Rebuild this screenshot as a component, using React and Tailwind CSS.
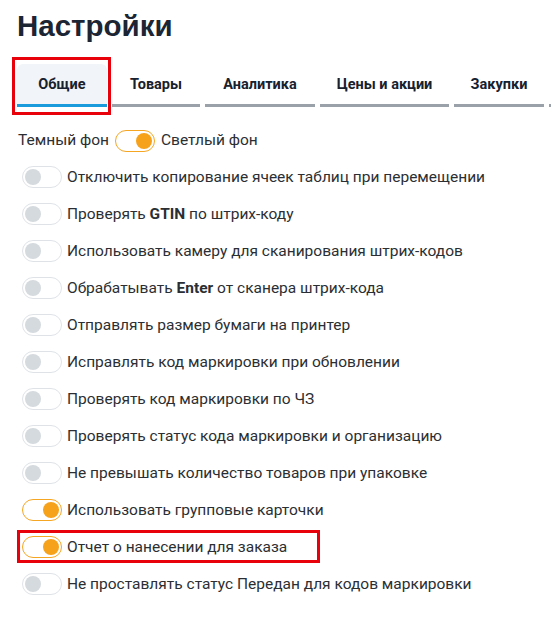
import React, { useState } from 'react'

const tabs = [
  { label: 'Общие', w: 'w-[90px]' },
  { label: 'Товары', w: 'w-[88px]' },
  { label: 'Аналитика', w: 'w-[110px]' },
  { label: 'Цены и акции', w: 'w-[129px]' },
  { label: 'Закупки', w: 'w-[90px]' },
  { label: '', w: 'w-[90px]' },
]

const rows = [
  { on: false, text: <>Отключить копирование ячеек таблиц при перемещении</> },
  { on: false, text: <>Проверять <b className="font-bold">GTIN</b> по штрих-коду</> },
  { on: false, text: <>Использовать камеру для сканирования штрих-кодов</> },
  { on: false, text: <>Обрабатывать <b className="font-bold">Enter</b> от сканера штрих-кода</> },
  { on: false, text: <>Отправлять размер бумаги на принтер</> },
  { on: false, text: <>Исправлять код маркировки при обновлении</> },
  { on: false, text: <>Проверять код маркировки по ЧЗ</> },
  { on: false, text: <>Проверять статус кода маркировки и организацию</> },
  { on: false, text: <>Не превышать количество товаров при упаковке</> },
  { on: true, text: <>Использовать групповые карточки</> },
  { on: true, text: <>Отчет о нанесении для заказа</>, marked: true },
  { on: false, text: <>Не проставлять статус Передан для кодов маркировки</> },
]

function Toggle({ on }) {
  return (
    <span
      className={`flex items-center shrink-0 w-[40px] h-[22px] rounded-full border px-[2px] bg-white ${
        on ? 'border-[#f5a623] justify-end' : 'border-[#dfe3e7] justify-start'
      }`}
    >
      <span className={`w-[16px] h-[16px] rounded-full ${on ? 'bg-[#f7a21b]' : 'bg-[#d5dade]'}`} />
    </span>
  )
}

export default function App() {
  const [active] = useState(0)
  return (
    <div className="w-[551px] h-[627px] bg-white overflow-hidden text-[#2b2f33]" style={{ fontFamily: 'Roboto, "Liberation Sans", sans-serif' }}>
      {/* Title */}
      <h1
        className="pl-[17px] pt-[8px] text-[29.5px] leading-[36px] font-bold text-[#1c2533]"
        style={{ fontFamily: '"Liberation Sans", Arial, sans-serif' }}
      >
        Настройки
      </h1>

      {/* Tabs */}
      <div className="mt-[20px] flex gap-[5px] pl-[17px] whitespace-nowrap">
        {tabs.map((t, i) => (
          <div
            key={i}
            className={`relative shrink-0 ${t.w} h-[43px] flex items-center justify-center text-[14.5px] font-bold text-[#18212e] border-b-[3px] rounded-t-[6px] ${
              i === active ? 'bg-[#f1f4f8] border-[#1a9bdc]' : 'border-[#9aa1a8]'
            }`}
          >
            <span className="pt-[2px]">{t.label}</span>
            {i === active && (
              <span className="absolute left-[-5px] right-[-4px] top-[-7px] bottom-[-11px] border-[3px] border-[#e8000b]" />
            )}
          </div>
        ))}
      </div>

      {/* Theme */}
      <div className="mt-[22px] pl-[18px] flex items-center gap-[6px] text-[15.5px]">
        <span>Темный фон</span>
        <Toggle on />
        <span>Светлый фон</span>
      </div>

      {/* Settings list */}
      <div className="mt-[14px] pl-[22px] flex flex-col gap-[15px]">
        {rows.map((r, i) => (
          <div key={i} className="relative flex items-center gap-[5px] h-[22px] text-[15.5px]">
            <Toggle on={r.on} />
            <span className="whitespace-nowrap">{r.text}</span>
            {r.marked && (
              <span className="absolute left-[-5px] w-[303px] top-[-6px] bottom-[-5px] border-[3px] border-[#e8000b]" />
            )}
          </div>
        ))}
      </div>
    </div>
  )
}
